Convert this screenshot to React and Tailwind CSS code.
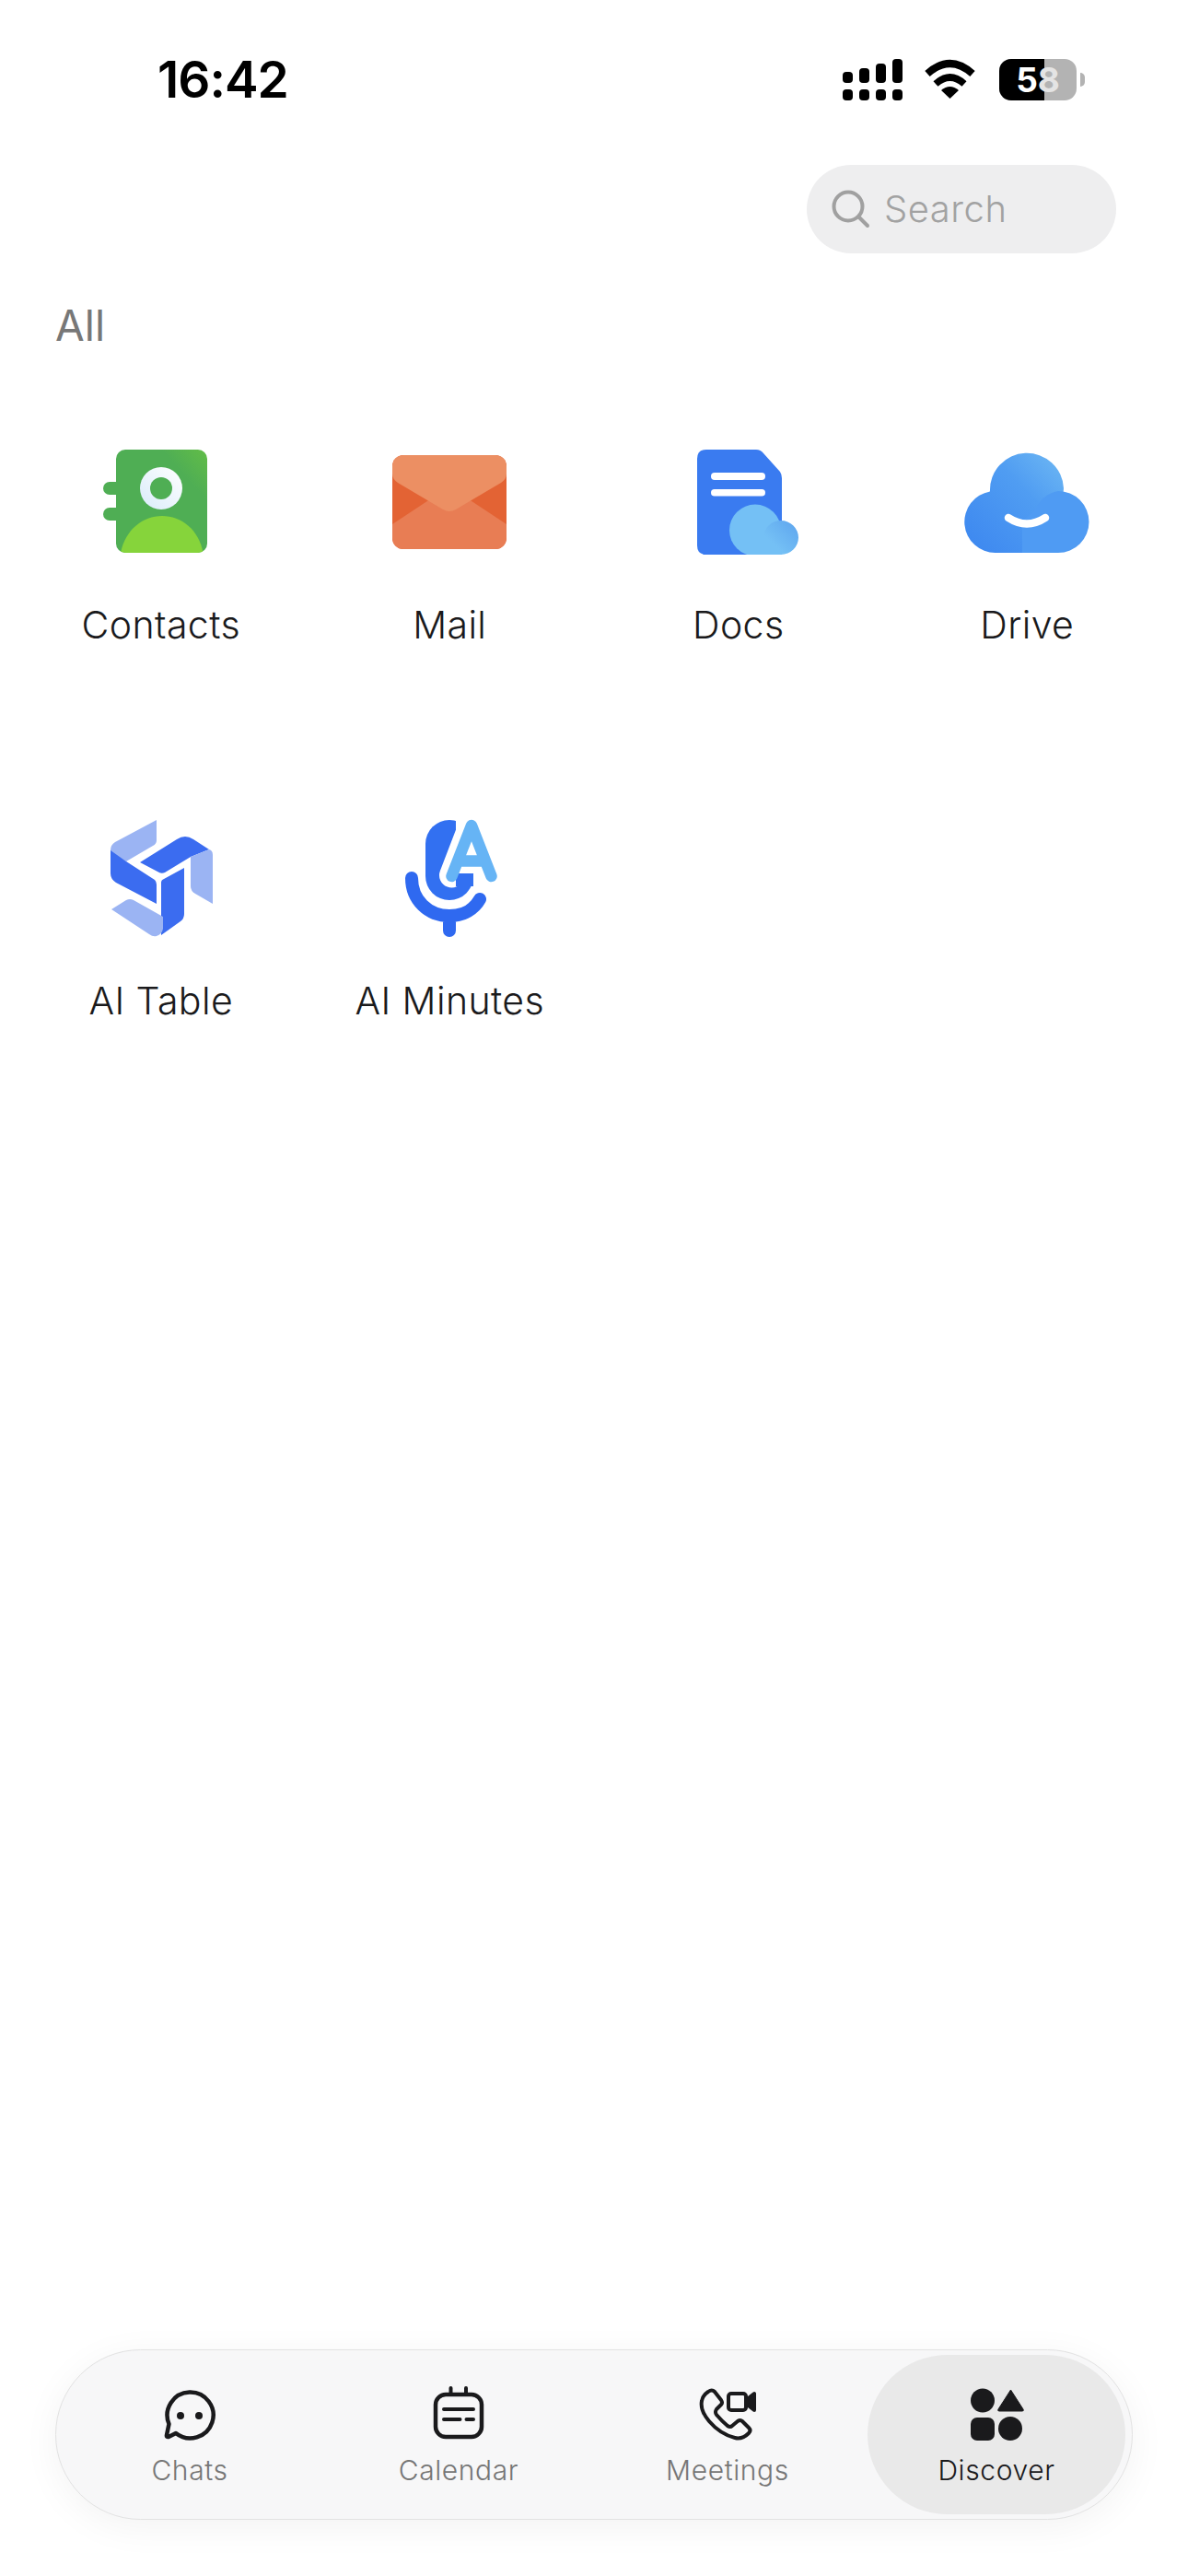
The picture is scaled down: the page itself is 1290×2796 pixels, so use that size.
const FONT = "font-['Inter','Noto_Sans',sans-serif]";

function Box({ cx, top, w = 160, h = 140, children }) {
  return (
    <svg width={w} height={h} viewBox={`${cx - w / 2} ${top} ${w} ${h}`} fill="none" className="block">
      {children}
    </svg>
  );
}

function ContactsIcon() {
  return (
    <Box cx={175} top={480}>
      <defs>
        <linearGradient id="cBody" x1="0" y1="1" x2="1" y2="0">
          <stop offset="0.75" stopColor="#4fae54" />
          <stop offset="1" stopColor="#62bd47" />
        </linearGradient>
        <linearGradient id="cRing" x1="0" y1="1" x2="1" y2="0">
          <stop offset="0" stopColor="#d9ebfa" />
          <stop offset="1" stopColor="#ffffff" />
        </linearGradient>
        <clipPath id="cClip"><rect x="126" y="488" width="99" height="112" rx="10" /></clipPath>
      </defs>
      <rect x="112" y="523" width="24" height="14" rx="7" fill="#4fae54" />
      <rect x="112" y="551" width="24" height="14" rx="7" fill="#4fae54" />
      <g clipPath="url(#cClip)">
        <rect x="126" y="488" width="99" height="112" fill="url(#cBody)" />
        <path d="M131 600C136 575 155 560 176 560C197 560 216 575 220.5 600Z" fill="#86d43b" />
      </g>
      <circle cx="175" cy="530" r="23" fill="url(#cRing)" />
      <circle cx="175" cy="530" r="12" fill="#4fae54" />
    </Box>
  );
}

function MailIcon() {
  return (
    <Box cx={488} top={480}>
      <defs>
        <clipPath id="mClip"><rect x="426" y="494" width="124" height="102" rx="12" /></clipPath>
      </defs>
      <g clipPath="url(#mClip)">
        <rect x="426" y="494" width="124" height="102" fill="#e36334" />
        <path d="M426 569L488 528L550 569V596H426Z" fill="#e87d54" />
        <path d="M426 494H550V514Q550 520 544 524L495 553Q488 557 481 553L432 524Q426 520 426 514Z" fill="#ec8f63" />
      </g>
    </Box>
  );
}

function DocsIcon() {
  return (
    <Box cx={801} top={480}>
      <defs>
        <linearGradient id="dSmall" x1="1" y1="0" x2="0" y2="1">
          <stop offset="0" stopColor="#5da4ee" />
          <stop offset="0.7" stopColor="#74c0f5" />
        </linearGradient>
        <clipPath id="dClip"><rect x="750" y="480" width="120" height="122" /></clipPath>
      </defs>
      <path d="M766 488H820Q825 488 828 492L846 512Q848 515 848 519V602H766Q756 602 756 592V498Q756 488 766 488Z" fill="#3a7bf0" />
      <rect x="771" y="513" width="59" height="8" rx="4" fill="#fff" />
      <rect x="771" y="531" width="59" height="7.5" rx="3.75" fill="#fff" />
      <g clipPath="url(#dClip)">
        <circle cx="819" cy="575.5" r="28" fill="#74c0f5" />
        <rect x="812" y="580" width="36" height="22" fill="#74c0f5" />
        <path d="M847 565A19 18.5 0 0 1 847 602H835V588Q828 584 828 582A19 18.5 0 0 1 847 565Z" fill="url(#dSmall)" />
      </g>
    </Box>
  );
}

function DriveIcon() {
  return (
    <Box cx={1115} top={480}>
      <defs>
        <linearGradient id="drA" gradientUnits="userSpaceOnUse" x1="1060" y1="590" x2="1155" y2="500">
          <stop offset="0" stopColor="#3f8af0" />
          <stop offset="0.6" stopColor="#509df2" />
          <stop offset="1" stopColor="#6cb6f3" />
        </linearGradient>
      </defs>
      <path d="M1075 533.5A40 40 0 0 1 1155 530L1149 600H1081A33.5 33.5 0 0 1 1075 533.5Z" fill="url(#drA)" />
      <path d="M1125 552A34 33 0 0 1 1149 533A33.5 33.5 0 0 1 1149 600H1081V566Q1105 575 1125 552Z" fill="#4f9bf3" />
      <path d="M1075 533.5A40 40 0 0 0 1081 600H1110L1110 560Z" fill="url(#drA)" />
      <path d="M1095 562Q1115 575 1135 562" stroke="#fff" strokeWidth="8.5" strokeLinecap="round" />
    </Box>
  );
}

function TableIcon() {
  return (
    <Box cx={175} top={888}>
      <path d="M170 890V912Q170 916 166 918L137 935L120 925V923Q120 917 125 914Z" fill="#9bb4f3" />
      <path d="M120 923L137 935L168 955Q170 957 170 960V981L126 958Q120 954 120 948Z" fill="#3b6cf0" />
      <path d="M152 936L192 911Q201 905 210 911L227 922L207 930L179 947Q175 949 171 946Z" fill="#3b6cf0" />
      <path d="M207 930L227 922Q231 923 231 928V981L212 970Q207 967 207 962Z" fill="#9bb4f3" />
      <path d="M200 942V992Q200 997 196 1000L175 1015V958Q175 955 178 954Z" fill="#3b6cf0" />
      <path d="M121 987L137 977Q141 975 145 977L177 995V1008Q176 1014 170 1016Q166 1017 162 1014Z" fill="#9bb4f3" />
    </Box>
  );
}

function MinutesIcon() {
  return (
    <Box cx={488} top={888}>
      <rect x="462" y="890" width="52" height="87" rx="26" fill="#3270f1" />
      <rect x="495" y="886" width="50" height="62" fill="#fff" />
      <path d="M512 894L490.5 950" stroke="#fff" strokeWidth="27" strokeLinecap="round" />
      <path d="M512 894L533 948H490.5Z" fill="#fff" stroke="#fff" strokeWidth="10" />
      <rect x="495" y="948" width="19" height="14" fill="#3270f1" />
      <path d="M490.5 951L512 896L533.5 951M499 934.5H525" stroke="#66b4f5" strokeWidth="12.5" strokeLinecap="round" strokeLinejoin="round" />
      <path d="M447 953C447 977 465 994 488 994C503 994 515 987 521 976M488 994V1010" stroke="#2f69f0" strokeWidth="14" strokeLinecap="round" />
    </Box>
  );
}

const APPS = [
  ["Contacts", ContactsIcon],
  ["Mail", MailIcon],
  ["Docs", DocsIcon],
  ["Drive", DriveIcon],
  ["AI Table", TableIcon],
  ["AI Minutes", MinutesIcon],
];

function Tab({ cx, label, active, children }) {
  return (
    <div className={`flex flex-col items-center pt-[34px] h-[173px] rounded-full ${active ? "bg-[#e9e9e9] text-[#1a1a1c]" : "text-[#767676]"}`}>
      <svg width="80" height="60" viewBox={`${cx - 40} 2590 80 60`} fill="none" className="block">
        {children}
      </svg>
      <span className="mt-[12px] text-[30px] leading-[38px] tracking-[0.6px] font-[350]">{label}</span>
    </div>
  );
}

export default function App() {
  return (
    <div className={`w-[1290px] h-[2796px] bg-[#ffffff] flex flex-col ${FONT}`}>
      <div className="flex items-center justify-between pt-[60px] pl-[171px] pr-[112px] h-[112px]">
        <span className="text-[55px] leading-[52px] font-semibold text-black tracking-[-1px]">16:42</span>
        <div className="flex items-center gap-[4px]">
          <svg width="150" height="52" viewBox="914 60 150 52" fill="none" className="block mr-[18px]">
            <g fill="#000">
              <rect x="916" y="78" width="11" height="12" rx="4" />
              <rect x="934" y="74" width="11" height="16" rx="4" />
              <rect x="952" y="69" width="11" height="21" rx="4" />
              <rect x="970" y="64" width="11" height="26" rx="4" />
              <rect x="916" y="97" width="11" height="12" rx="4" />
              <rect x="934" y="97" width="11" height="12" rx="4" />
              <rect x="952" y="97" width="11" height="12" rx="4" />
              <rect x="970" y="97" width="11" height="12" rx="4" />
              <path d="M1023 98Q1032.5 90 1042 98L1032.5 107Z" />
            </g>
            <path d="M1008 80Q1032.5 58 1057 80" stroke="#000" strokeWidth="8" />
            <path d="M1017 91Q1032.5 77 1048 91" stroke="#000" strokeWidth="7.5" />
          </svg>
          <div className="relative w-[84px] h-[45px] rounded-[13px] overflow-hidden bg-[#b3b3b3]">
            <div className="w-[49px] h-full bg-black" />
            <div className="absolute inset-0 flex items-center justify-center text-[37px] leading-none font-bold text-white">
              <span>5</span>
              <span className="text-[#e4e4e4]">8</span>
            </div>
          </div>
          <div className="w-[5px] h-[15px] rounded-r-[5px] bg-[#b3b3b3]" />
        </div>
      </div>

      <div className="flex justify-end pr-[78px] mt-[67px]">
        <div className="w-[336px] h-[96px] rounded-full bg-[#eeeeef] flex items-center pl-[27px] gap-[15px]">
          <svg width="42" height="42" viewBox="0 0 42 42" fill="none" className="block">
            <circle cx="18" cy="18" r="15.5" stroke="#a0a0a0" strokeWidth="4" />
            <path d="M29.5 29.5L39 39" stroke="#a0a0a0" strokeWidth="4" strokeLinecap="round" />
          </svg>
          <span className="text-[40px] leading-[48px] tracking-[0.5px] text-[#a2a2a2] font-[350]">Search</span>
        </div>
      </div>

      <div className="pl-[60px] mt-[50px] text-[46px] leading-[56px] font-normal text-[#777777]">All</div>

      <div className="grid grid-cols-4 px-[18px] mt-[99px] h-[0px]">
        {APPS.map(([label, Icon]) => (
          <div key={label} className="flex flex-col items-center h-[408px]">
            <Icon />
            <span className="mt-[33px] text-[41px] leading-[50px] tracking-[0.4px] text-[#1a1a1c] font-[350]">{label}</span>
          </div>
        ))}
      </div>

      <div className="mt-auto mb-[61px] mx-[60px] h-[185px] rounded-full border border-[#e2e2e2] bg-[#f7f7f8] shadow-[0_8px_40px_rgba(0,0,0,0.05)] py-[5px]">
        <div className="grid grid-cols-4 w-[1168px] -ml-[1px]">
          <Tab cx={206} label="Chats">
            <path d="M191 2641A25 25 0 1 0 183.5 2631L181 2643Q180.5 2645.5 183 2645Z" stroke="#1a1a1c" strokeWidth="4.5" strokeLinejoin="round" />
            <circle cx="196" cy="2622" r="4" fill="#1a1a1c" />
            <circle cx="216" cy="2622" r="4" fill="#1a1a1c" />
          </Tab>
          <Tab cx={498} label="Calendar">
            <rect x="473" y="2599" width="50" height="46" rx="11" stroke="#1a1a1c" strokeWidth="4.5" />
            <path d="M489.5 2592V2598M506 2592V2598M482 2615H514M482 2626H499.5M506.5 2626H514" stroke="#1a1a1c" strokeWidth="4" strokeLinecap="round" />
          </Tab>
          <Tab cx={790} label="Meetings">
            <path d="M769 2596Q773 2593 776 2596L783 2605Q785 2608 783 2610L778 2615Q776 2618 778 2621Q784 2628 790 2633Q793 2635 795 2633L801 2628Q804 2626 806 2628L813 2635Q816 2638 813 2641Q806 2648 798 2646Q782 2642 770 2628Q760 2616 762 2606Q763 2600 769 2596Z" stroke="#1a1a1c" strokeWidth="4" strokeLinejoin="round" />
            <rect x="791" y="2598" width="19" height="18" rx="3" stroke="#1a1a1c" strokeWidth="4" />
            <path d="M810 2605L819 2598V2616L810 2609Z" stroke="#1a1a1c" strokeWidth="4" strokeLinejoin="round" fill="#1a1a1c" />
          </Tab>
          <div className="px-[6px]">
            <Tab cx={1082} label="Discover" active>
              <circle cx="1067" cy="2605.5" r="13" fill="#1a1a1c" />
              <path d="M1097.5 2594L1111 2615Q1112 2617 1110 2617H1085Q1083 2617 1084 2615Z" fill="#1a1a1c" stroke="#1a1a1c" strokeLinejoin="round" />
              <rect x="1054" y="2624" width="26" height="25" rx="7" fill="#1a1a1c" />
              <circle cx="1097" cy="2636" r="13" fill="#1a1a1c" />
            </Tab>
          </div>
        </div>
      </div>
    </div>
  );
}
